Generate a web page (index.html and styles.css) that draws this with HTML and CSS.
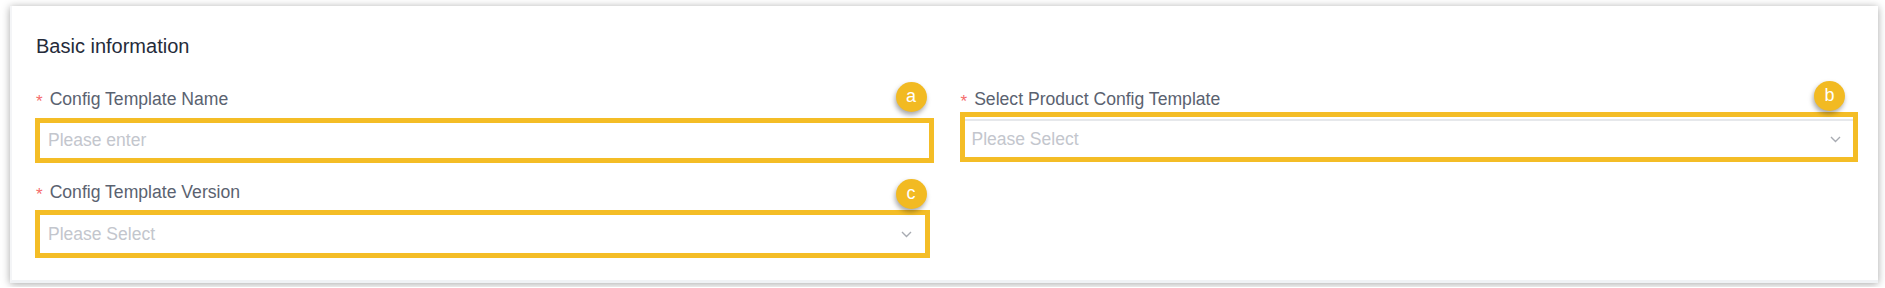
FILE: index.html
```html
<!DOCTYPE html>
<html lang="en">
<head>
  <meta charset="UTF-8">
  <meta name="viewport" content="width=device-width, initial-scale=1.0">
  <title>Basic information</title>
  <link rel="stylesheet" href="styles.css">
</head>
<body>

  <div class="card">
    <h3 class="card-title">Basic information</h3>

    <form class="form-grid">
      <div class="form-item">
        <label class="form-label"><span class="required">*</span>Config Template Name</label>
        <div class="field field-name">
          <input type="text" class="field-input" placeholder="Please enter">
        </div>
        <span class="badge badge-a">a</span>
      </div>

      <div class="form-item">
        <label class="form-label"><span class="required">*</span>Select Product Config Template</label>
        <div class="field field-product">
          <div class="field-select">
            <span class="placeholder">Please Select</span>
            <svg class="chevron" width="11" height="7" viewBox="0 0 11 7"><path d="M1 1l4.5 4.5L10 1" fill="none" stroke="#a8abb2" stroke-width="1.4"/></svg>
          </div>
        </div>
        <span class="badge badge-b">b</span>
      </div>

      <div class="form-item">
        <label class="form-label"><span class="required">*</span>Config Template Version</label>
        <div class="field field-version">
          <div class="field-select">
            <span class="placeholder">Please Select</span>
            <svg class="chevron" width="11" height="7" viewBox="0 0 11 7"><path d="M1 1l4.5 4.5L10 1" fill="none" stroke="#a8abb2" stroke-width="1.4"/></svg>
          </div>
        </div>
        <span class="badge badge-c">c</span>
      </div>
    </form>
  </div>

</body>
</html>
```

FILE: styles.css
```css
/* Global styles */
* {
  margin: 0;
  padding: 0;
  box-sizing: border-box;
  font-family: 'Liberation Sans', Arial, sans-serif;
}

body {
  background: #fff;
  padding: 6px 7px 4px 10px;
}

/* Card */
.card {
  background: #fff;
  border-left: 2px solid #f4f5f7;
  border-bottom: 3px solid #f0f2f5;
  box-shadow: 0 1px 8px rgba(0, 0, 0, 0.35);
  height: 277px;
  padding: 26px 20px 0 23px;
}

.card-title {
  font-size: 20px;
  font-weight: normal;
  line-height: 28px;
  color: #252b3a;
  margin-left: 1px;
  margin-bottom: 27px;
}

/* Form layout */
.form-grid {
  display: grid;
  grid-template-columns: 1fr 1fr;
  column-gap: 26px;
  row-gap: 17px;
}

.form-item {
  position: relative;
}

.form-label {
  display: block;
  font-size: 17.6px;
  line-height: 24px;
  color: #5a6270;
  padding-left: 1px;
}

.required {
  color: #f56c6c;
  font-size: 17px;
  margin-right: 7px;
  position: relative;
  top: 2px;
}

/* Highlighted fields */
.field {
  border: 5px solid #f4bd26;
  background: #fff;
}

.field-name {
  margin-top: 6px;
  height: 45px;
}

.field-product {
  height: 50px;
}

.field-version {
  margin-top: 5px;
  height: 48px;
  width: calc(100% - 4px);
}

.field-input {
  width: 100%;
  height: 100%;
  border: none;
  outline: none;
  padding: 0 8px;
  font-size: 17.5px;
  color: #606266;
  background: transparent;
}

.field-input::placeholder,
.placeholder {
  color: #c3c6cd;
  font-size: 17.5px;
}

.field-select {
  height: 100%;
  display: flex;
  align-items: center;
  justify-content: space-between;
  padding: 0 13px 0 8px;
}

.field-product .field-select {
  border-top: 2px solid #e6e8eb;
  margin-top: 2px;
  height: calc(100% - 2px);
  padding: 0 12px 0 7px;
}

.chevron {
  display: block;
}

/* Annotation badges */
.badge {
  position: absolute;
  width: 31px;
  height: 30px;
  border-radius: 50%;
  background: #f2ba22;
  color: #fff;
  font-size: 18px;
  line-height: 28px;
  text-align: center;
  box-shadow: -1px 3px 5px rgba(0, 0, 0, 0.35);
}

.badge-a {
  top: -5px;
  right: 7px;
}

.badge-b {
  top: -6px;
  right: 13px;
}

.badge-c {
  top: -1px;
  right: 7px;
}
```
